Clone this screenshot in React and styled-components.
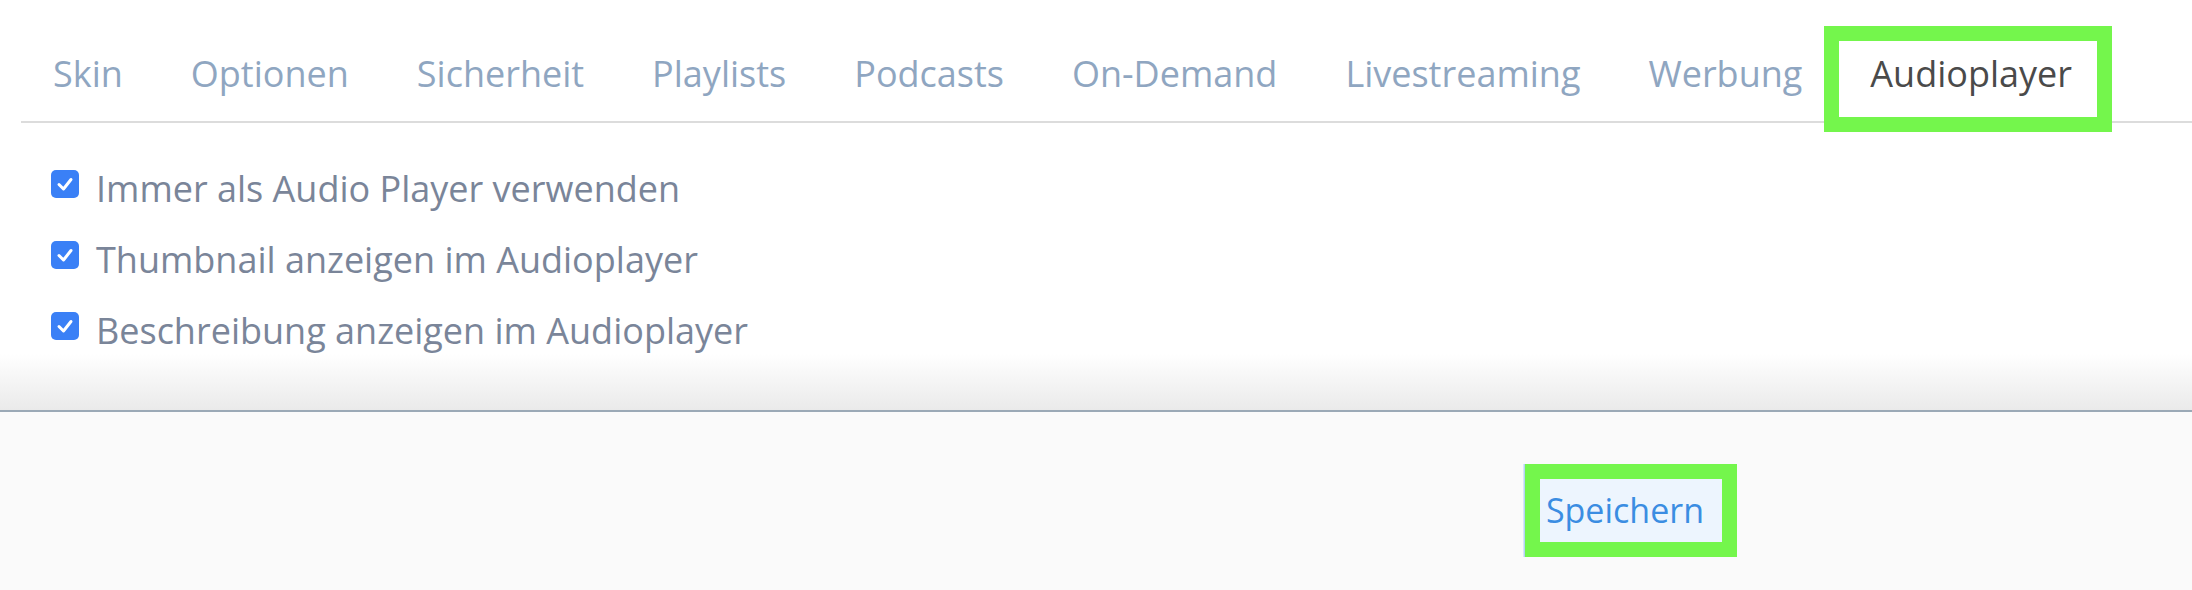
import React, { useState } from "react";
import styled, { createGlobalStyle } from "styled-components";

const GlobalStyle = createGlobalStyle`
  html, body {
    margin: 0;
    padding: 0;
    background: #ffffff;
  }
  body {
    font-family: "Open Sans", "Noto Sans", "Liberation Sans", sans-serif;
  }
`;

const Page = styled.div`
  display: flex;
  flex-direction: column;
  width: 2192px;
  height: 590px;
  overflow: hidden;
`;

const Content = styled.div`
  padding: 41px 0 54px 21px;
  background: linear-gradient(
    to bottom,
    #ffffff 0,
    #ffffff calc(100% - 56px),
    #eaeaea 100%
  );
`;

const TabList = styled.div`
  display: flex;
  align-items: flex-end;
  padding-bottom: 4px;
  border-bottom: 2px solid #dcdcdc;
`;

const Tab = styled.button`
  font-family: inherit;
  font-size: 36px;
  line-height: 50px;
  padding: 8px 34px 18px;
  border: none;
  background: #ffffff;
  color: #8fa6c1;
  cursor: pointer;
  white-space: nowrap;

  &:first-child {
    padding-left: 32px;
  }

  &[aria-selected="true"] {
    color: #4a4a4a;
    margin-left: 3px;
    padding: 8px 25px 18px 31px;
    outline: 15px solid #74f64c;
  }
`;

const CheckList = styled.div`
  display: flex;
  flex-direction: column;
  gap: 21px;
  margin-top: 41px;
  padding-left: 30px;
`;

const Row = styled.label`
  display: flex;
  align-items: flex-start;
  gap: 17px;
  height: 50px;
  cursor: pointer;
`;

const Box = styled.span`
  flex: none;
  width: 28px;
  height: 28px;
  margin-top: 6px;
  border-radius: 5px;
  background: ${(p) => (p.$checked ? "#3a80f6" : "#ffffff")};
  border: ${(p) => (p.$checked ? "none" : "2px solid #9aa4b4")};
  box-sizing: border-box;
  display: flex;
  align-items: center;
  justify-content: center;
`;

const Label = styled.span`
  font-size: 36px;
  line-height: 50px;
  color: #7a8599;
`;

const Footer = styled.div`
  flex: 1;
  display: flex;
  justify-content: flex-end;
  align-items: flex-start;
  padding: 52px 455px 0 0;
  border-top: 2px solid #9ba9b6;
  background: #fafafa;
`;

const SaveButton = styled.button`
  font-family: inherit;
  font-size: 34px;
  line-height: 63px;
  padding: 0 18px 0 6px;
  background: #edf5fe;
  color: #3b8de2;
  border: 15px solid #74f64c;
  box-shadow: -1.5px 0 0 0 #b3d2f4;
  cursor: pointer;
`;

const tabs = [
  "Skin",
  "Optionen",
  "Sicherheit",
  "Playlists",
  "Podcasts",
  "On-Demand",
  "Livestreaming",
  "Werbung",
  "Audioplayer",
];

const options = [
  "Immer als Audio Player verwenden",
  "Thumbnail anzeigen im Audioplayer",
  "Beschreibung anzeigen im Audioplayer",
];

const CheckIcon = () => (
  <svg width="20" height="20" viewBox="0 0 20 20">
    <polyline
      points="4,10.5 8.5,15 16,5.5"
      fill="none"
      stroke="#ffffff"
      strokeWidth="3"
      strokeLinecap="round"
      strokeLinejoin="round"
    />
  </svg>
);

const App = () => {
  const [active, setActive] = useState("Audioplayer");
  const [checked, setChecked] = useState([true, true, true]);

  const toggle = (i) => {
    const next = [...checked];
    next[i] = !next[i];
    setChecked(next);
  };

  return (
    <Page>
      <GlobalStyle />
      <Content>
        <TabList role="tablist">
          {tabs.map((t) => (
            <Tab
              key={t}
              role="tab"
              aria-selected={t === active}
              onClick={() => setActive(t)}
            >
              {t}
            </Tab>
          ))}
        </TabList>
        <CheckList>
          {options.map((o, i) => (
            <Row key={o} onClick={() => toggle(i)}>
              <Box $checked={checked[i]}>{checked[i] && <CheckIcon />}</Box>
              <Label>{o}</Label>
            </Row>
          ))}
        </CheckList>
      </Content>
      <Footer>
        <SaveButton>Speichern</SaveButton>
      </Footer>
    </Page>
  );
};

export default App;
